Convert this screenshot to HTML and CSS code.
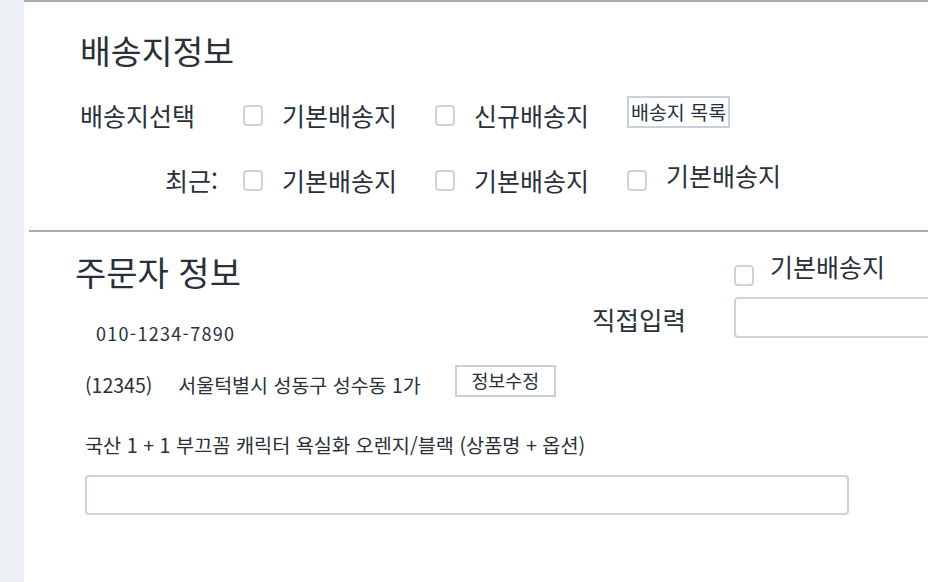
FILE: index.html
```html
<!DOCTYPE html>
<html lang="ko">
<head>
<meta charset="utf-8">
<title>배송지정보</title>
<link rel="stylesheet" href="styles.css">
</head>
<body>
<div class="page">
  <section class="ship">
    <h2 class="ship-title">배송지정보</h2>
    <div class="ship-grid">
      <div class="ship-label">배송지선택</div>
      <div class="options">
        <label class="opt"><span class="cb"></span><span class="opt-text">기본배송지</span></label>
        <label class="opt"><span class="cb"></span><span class="opt-text">신규배송지</span></label>
        <button class="btn btn-list" type="button">배송지 목록</button>
      </div>
      <div class="ship-label ship-label-right">최근:</div>
      <div class="options">
        <label class="opt"><span class="cb"></span><span class="opt-text">기본배송지</span></label>
        <label class="opt"><span class="cb"></span><span class="opt-text">기본배송지</span></label>
        <label class="opt opt-raised"><span class="cb"></span><span class="opt-text">기본배송지</span></label>
      </div>
    </div>
  </section>

  <section class="orderer">
    <div class="orderer-head">
      <div class="orderer-left">
        <h2 class="orderer-title">주문자 정보</h2>
        <div class="phone">010-1234-7890</div>
      </div>
      <div class="direct">
        <div></div>
        <label class="direct-check"><span class="cb"></span><span class="opt-text">기본배송지</span></label>
        <span class="direct-label">직접입력</span>
        <input class="direct-input" type="text">
      </div>
    </div>
    <div class="addr">
      <span class="zip">(12345)</span>
      <span class="addr-text">서울턱별시 성동구 성수동 1가</span>
      <button class="btn btn-edit" type="button">정보수정</button>
    </div>
    <div class="product">국산 1 + 1 부끄꼼 캐릭터 욕실화 오렌지/블랙 (상품명 + 옵션)</div>
    <input class="product-input" type="text">
  </section>
</div>
</body>
</html>
```

FILE: styles.css
```css
* { box-sizing: border-box; }

html, body {
  margin: 0;
  padding: 0;
  height: 100%;
  overflow: hidden;
}

body {
  background: #edf1f5;
  font-family: "Noto Sans CJK KR", "Noto Sans", sans-serif;
  color: #28303a;
}

.page {
  margin-left: 24px;
  height: 582px;
  background: #ffffff;
  border-top: 2px solid #a3adb9;
  overflow: hidden;
}

/* ---------- 배송지정보 ---------- */
.ship {
  padding: 31px 0 29px 56px;
}

.ship-title {
  margin: 0 0 29px 0;
  font-size: 33.5px;
  line-height: 1;
  font-weight: 400;
}

.ship-grid {
  display: grid;
  grid-template-columns: 163px 1fr;
  grid-auto-rows: 40px;
  row-gap: 25px;
  align-items: center;
}

.ship-label {
  font-size: 25px;
  line-height: 1;
}

.ship-label-right {
  text-align: right;
  padding-right: 25px;
}

.options {
  display: flex;
  align-items: center;
  height: 40px;
}

.opt {
  display: flex;
  align-items: center;
  gap: 19px;
  margin-right: 38px;
  font-size: 25px;
  line-height: 1;
}

.opt-raised .opt-text {
  margin-bottom: 10px;
}

.opt-text {
  display: block;
}

.cb {
  display: block;
  width: 20px;
  height: 21px;
  border: 2px solid #ccd3db;
  border-radius: 4px;
  background: #fff;
  flex: none;
}

.btn {
  font-family: inherit;
  color: #28303a;
  background: #fff;
  border: 2px solid #c8d0d9;
  border-radius: 0;
  line-height: 1;
  margin: 0;
  cursor: pointer;
}

.btn-list {
  align-self: flex-start;
  width: 103px;
  height: 32px;
  padding: 0;
  font-size: 19.5px;
}

/* ---------- 주문자 정보 ---------- */
.orderer {
  margin-left: 5px;
  border-top: 2px solid #a3adb9;
  padding: 0 0 0 56px;
}

.orderer-head {
  display: grid;
  grid-template-columns: 507px 1fr;
}

.orderer-title {
  margin: 23px 0 0 -10px;
  font-size: 34px;
  line-height: 1;
  font-weight: 400;
}

.phone {
  margin: 35px 0 0 11px;
  font-size: 18px;
  line-height: 1;
  letter-spacing: 1.3px;
}

.direct {
  display: grid;
  grid-template-columns: 95px 1fr;
  grid-template-rows: 32px 41px;
  column-gap: 47px;
  row-gap: 11px;
  padding-top: 22px;
  align-items: center;
}

.direct-check {
  display: flex;
  align-items: flex-end;
  gap: 16px;
  height: 32px;
  font-size: 25px;
  line-height: 1;
}

.direct-check .opt-text {
  align-self: flex-start;
}

.direct-label {
  font-size: 25.5px;
  line-height: 1;
  white-space: nowrap;
  margin-top: 3px;
}

.direct-input {
  width: 240px;
  height: 41px;
  border: 2px solid #ccd3db;
  border-radius: 4px;
  background: #fff;
  padding: 0 8px;
  font-family: inherit;
  outline: none;
}

.addr {
  display: flex;
  align-items: center;
  height: 32px;
  margin-top: 23px;
  font-size: 19.5px;
  line-height: 1;
}

.zip {
  margin-right: 26px;
  margin-top: 8px;
}

.addr-text {
  margin-right: 34px;
  margin-top: 8px;
}

.btn-edit {
  width: 101px;
  height: 32px;
  padding: 0;
  font-size: 18.4px;
}

.product {
  margin-top: 38px;
  font-size: 19.7px;
  line-height: 1;
}

.product-input {
  display: block;
  margin-top: 21px;
  width: 764px;
  height: 40px;
  border: 2px solid #ccd3db;
  border-radius: 4px;
  background: #fff;
  padding: 0 10px;
  font-family: inherit;
  outline: none;
}
```
